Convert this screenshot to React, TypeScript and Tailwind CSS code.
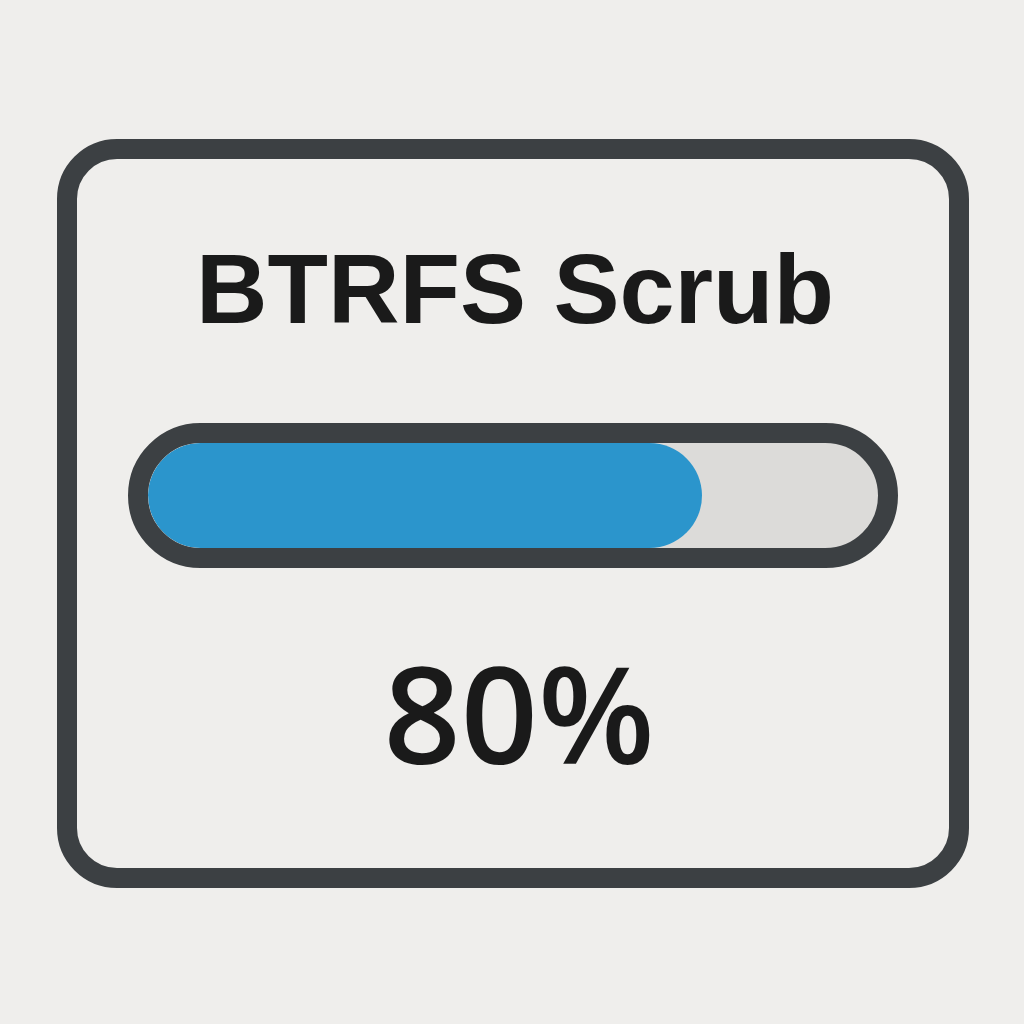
export default function App() {
  const progress = 554; // fill width in px

  return (
    <div className="w-[1024px] h-[1024px] bg-[#efeeec] pt-[139px] pl-[57px]">
      <div className="w-[912px] h-[749px] border-[20px] border-[#3c4043] rounded-[60px] flex flex-col pt-[80px] px-[51px]">
        <h1 className="pl-[4px] text-center text-[99px] leading-none font-bold text-[#1a1a1a] font-['Liberation_Sans',Arial,sans-serif]">
          BTRFS Scrub
        </h1>

        <div className="mt-[85px] h-[145px] border-[20px] border-[#3c4043] rounded-full bg-[#dcdbd9] overflow-hidden">
          <div className="h-full rounded-full bg-[#2b95cc]" style={{ width: progress }} />
        </div>

        <div className="mt-[77px] pl-[12px] text-center text-[135px] leading-none font-semibold text-[#1a1a1a] font-['Open_Sans',sans-serif]">
          80%
        </div>
      </div>
    </div>
  );
}
